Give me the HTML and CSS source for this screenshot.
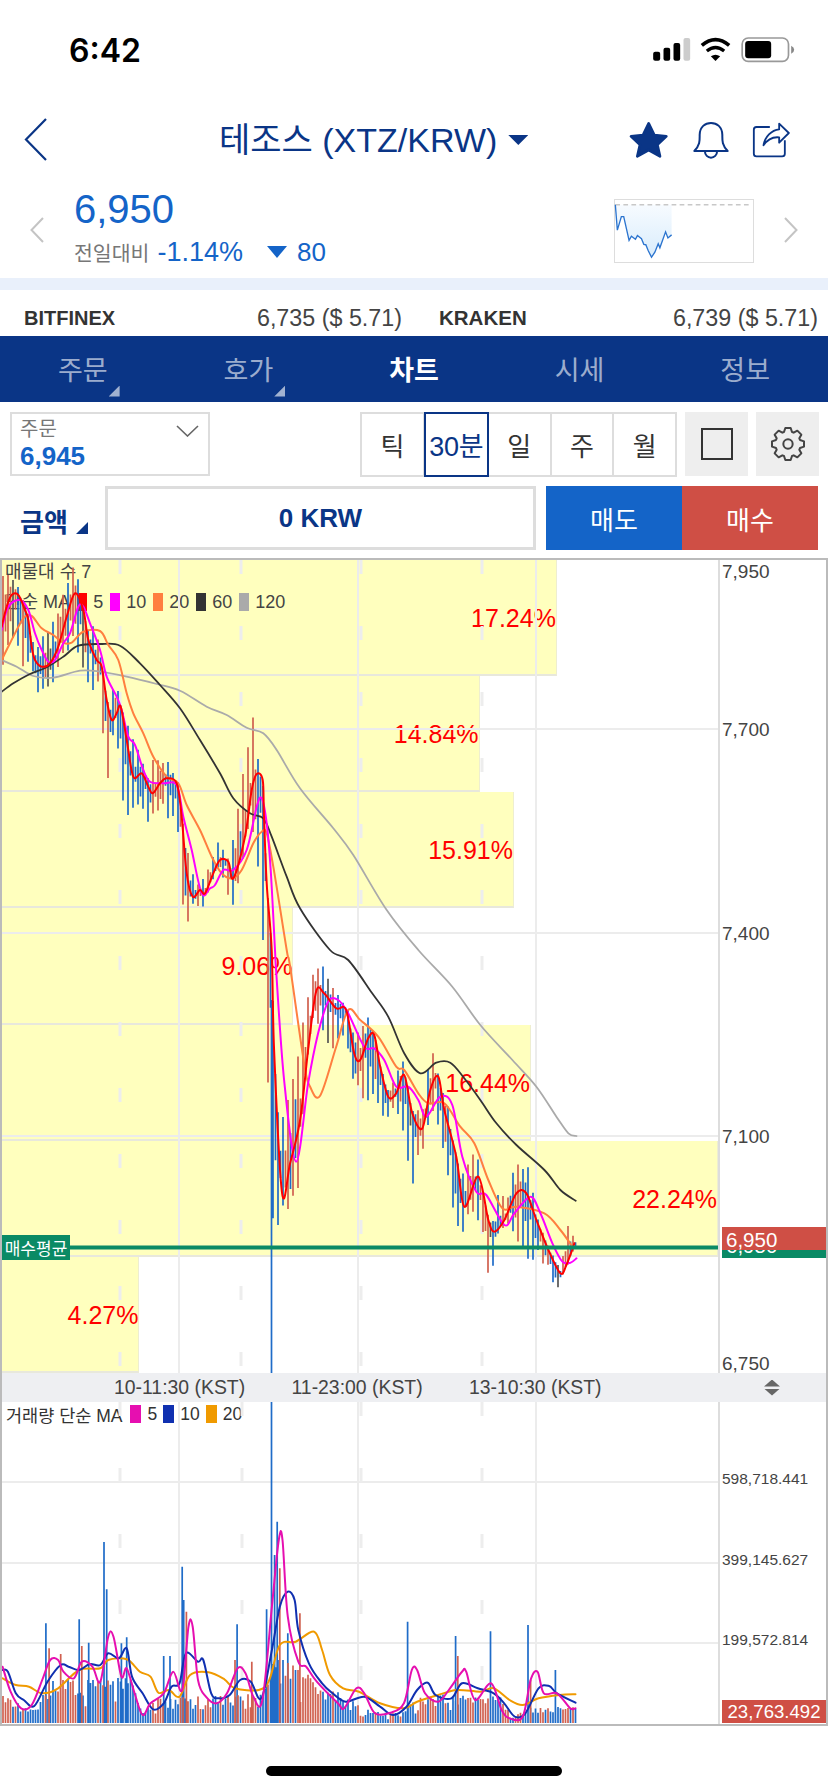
FILE: index.html
```html
<!DOCTYPE html>
<html lang="ko">
<head>
<meta charset="utf-8">
<title>테조스 (XTZ/KRW)</title>
<link rel="stylesheet" href="styles.css">
</head>
<body>
<div class="page">
  <header class="status">
    <span class="time">6:42</span>
    <svg class="status-icons" viewBox="90 30 440 90" aria-hidden="true">
      <rect x="99" y="80" width="21" height="27" rx="6" fill="#000"/>
      <rect x="130" y="68" width="20" height="39" rx="6" fill="#000"/>
      <rect x="160" y="54" width="20" height="53" rx="6" fill="#000"/>
      <rect x="190" y="39" width="20" height="68" rx="6" fill="#ccc"/>
      <path d="M245 61Q286 27 327 61" fill="none" stroke="#000" stroke-width="11"/>
      <path d="M260 78Q286 57 312 78" fill="none" stroke="#000" stroke-width="10"/>
      <path d="M272 94Q286 84 300 94L286 108Z" fill="#000"/>
      <rect x="366" y="39" width="139" height="70" rx="18" fill="none" stroke="#999" stroke-width="5"/>
      <rect x="375" y="48" width="78" height="52" rx="9" fill="#000"/>
      <path d="M513 62Q522 66 522 74Q522 82 513 86Z" fill="#888"/>
    </svg>
  </header>

  <div class="title-row">
    <svg class="back" viewBox="0 0 23 43" aria-hidden="true"><path d="M22 1L2 21.5L22 42" fill="none" stroke="#0a3586" stroke-width="2.2"/></svg>
    <h1 class="title">테조스 (XTZ/KRW)</h1>
    <span class="title-caret"></span>
    <div class="title-icons">
      <svg class="ic-star" viewBox="28 286 120 114" aria-hidden="true"><polygon points="87,293 104,328 140,332 113,357 121,392 87,373 53,392 61,357 34,332 70,328" fill="#0a3586" stroke="#0a3586" stroke-width="8" stroke-linejoin="round"/></svg>
      <svg class="ic-bell" viewBox="215 288 114 114" aria-hidden="true"><path d="M222 378C240 360 238 345 238 330C238 305 255 294 272 294C289 294 306 305 306 330C306 345 304 360 322 378Z M254 380A18 18 0 0 0 290 380" fill="none" stroke="#0a3586" stroke-width="6" stroke-linejoin="round"/></svg>
      <svg class="ic-share" viewBox="392 290 116 108" aria-hidden="true"><path d="M445 305H405Q397 305 397 313V385Q397 393 405 393H482Q490 393 490 385V345M473 295L502 323L473 352V336C455 334 438 342 426 360C430 335 450 314 473 312Z" fill="none" stroke="#0a3586" stroke-width="5.5" stroke-linejoin="round"/></svg>
    </div>
  </div>

  <div class="price-row">
    <svg class="chev" viewBox="0 0 14 26" aria-hidden="true"><path d="M13 1L1.5 13L13 25" fill="none" stroke="#c4c4c4" stroke-width="2"/></svg>
    <div class="price-col">
      <div class="price">6,950</div>
      <div class="change"><span class="change-label">전일대비</span><span class="change-pct">-1.14%</span><span class="change-caret"></span><span class="change-val">80</span></div>
    </div>
    <svg class="spark" viewBox="43 28 418 189" preserveAspectRatio="none" aria-hidden="true">
      <defs><linearGradient id="sparkfill" x1="0" y1="0" x2="0" y2="1"><stop offset="0" stop-color="#f7fbff"/><stop offset="1" stop-color="#d8ecfc"/></linearGradient></defs>
      <rect x="44.5" y="29.5" width="415" height="186" fill="#fff" stroke="#ddd" stroke-width="3"/>
      <polygon points="47,45 53,120 65,80 72,80 88,150 95,138 107,147 113,136 125,145 132,162 138,163 145,180 155,200 165,185 175,160 180,172 197,125 204,143 215,134 215,45" fill="url(#sparkfill)"/>
      <path d="M47 45H447" stroke="#c8c8c8" stroke-width="5" stroke-dasharray="14 10" fill="none"/>
      <polyline points="47,45 53,120 65,80 72,80 88,150 95,138 107,147 113,136 125,145 132,162 138,163 145,180 155,200 165,185 175,160 180,172 197,125 204,143 215,134" fill="none" stroke="#2b74cf" stroke-width="4"/>
    </svg>
    <svg class="chev chev-right" viewBox="0 0 14 26" aria-hidden="true"><path d="M1 1L12.5 13L1 25" fill="none" stroke="#c4c4c4" stroke-width="2"/></svg>
  </div>

  <div class="band"></div>

  <div class="exchanges">
    <div class="exchange"><b>BITFINEX</b><span>6,735 ($ 5.71)</span></div>
    <div class="exchange"><b class="wide">KRAKEN</b><span>6,739 ($ 5.71)</span></div>
  </div>

  <nav class="tabs">
    <div class="tab"><span class="tab-label">주문<i class="corner"></i></span></div>
    <div class="tab"><span class="tab-label">호가<i class="corner"></i></span></div>
    <div class="tab active"><span class="tab-label">차트</span></div>
    <div class="tab"><span class="tab-label">시세</span></div>
    <div class="tab"><span class="tab-label">정보</span></div>
  </nav>

  <div class="toolbar">
    <div class="order-select">
      <div class="order-text"><div class="order-label">주문</div><div class="order-val">6,945</div></div>
      <svg class="order-chev" viewBox="0 0 23 12" aria-hidden="true"><path d="M1 1L11.5 11L22 1" fill="none" stroke="#666" stroke-width="1.6"/></svg>
    </div>
    <div class="segments">
      <div class="seg">틱</div>
      <div class="seg active">30분</div>
      <div class="seg">일</div>
      <div class="seg">주</div>
      <div class="seg">월</div>
    </div>
    <div class="tool-btn"><span class="square-ic"></span></div>
    <div class="tool-btn">
      <svg class="gear" viewBox="-54 -54 108 108" aria-hidden="true"><polygon points="-8,-48 8,-48 12,-36 17,-34 28,-40 40,-28 34,-17 36,-12 48,-8 48,8 36,12 34,17 40,28 28,40 17,34 12,36 8,48 -8,48 -12,36 -17,34 -28,40 -40,28 -34,17 -36,12 -48,8 -48,-8 -36,-12 -34,-17 -40,-28 -28,-40 -17,-34 -12,-36" fill="none" stroke="#444" stroke-width="6" stroke-linejoin="round"/><circle r="14" fill="none" stroke="#444" stroke-width="6"/></svg>
    </div>
  </div>

  <div class="trade-row">
    <div class="amount-label">금액<i class="amount-corner"></i></div>
    <div class="amount-input">0 KRW</div>
    <div class="trade-btn sell">매도</div>
    <div class="trade-btn buy">매수</div>
  </div>

  <section class="chart">
    <div class="pane main-pane">
      <div class="plot">
        <div class="vp">
          <div class="vp-row"><div class="vp-bar" style="width:77.5%">17.24%</div></div>
          <div class="vp-row"><div class="vp-bar" style="width:66.7%">14.84%</div></div>
          <div class="vp-row"><div class="vp-bar" style="width:71.5%">15.91%</div></div>
          <div class="vp-row"><div class="vp-bar" style="width:40.7%">9.06%</div></div>
          <div class="vp-row"><div class="vp-bar" style="width:73.9%">16.44%</div></div>
          <div class="vp-row"><div class="vp-bar" style="width:100%">22.24%</div></div>
          <div class="vp-row"><div class="vp-bar" style="width:19.2%">4.27%</div></div>
        </div>
        <div class="legend main-legend">
          <div class="legend-line">매물대 수 7</div>
          <div class="legend-line">단순 MA
            <i class="sw sw-red"></i>5<i class="sw sw-mag"></i>10<i class="sw sw-org"></i>20<i class="sw sw-blk"></i>60<i class="sw sw-gry"></i>120
          </div>
        </div>
        <svg id="price-svg" class="plot-svg" viewBox="2 560 716 813" aria-hidden="true"></svg>
        <div class="avg-tag">매수평균</div>
      </div>
      <div class="axis">
        <span class="tick" style="top:1px">7,950</span>
        <span class="tick" style="top:159px">7,700</span>
        <span class="tick" style="top:363px">7,400</span>
        <span class="tick" style="top:566px">7,100</span>
        <span class="tick" style="top:793px">6,750</span>
        <span class="tag tag-green" style="top:674px">6,950</span>
        <span class="tag tag-red" style="top:667px">6,950</span>
      </div>
    </div>

    <div class="pane time-pane">
      <div class="time-labels">
        <span>10-11:30 (KST)</span>
        <span>11-23:00 (KST)</span>
        <span>13-10:30 (KST)</span>
      </div>
      <div class="time-handle"><i class="up"></i><i class="down"></i></div>
    </div>

    <div class="pane vol-pane">
      <div class="plot">
        <div class="legend vol-legend"><span class="vol-name">거래량 단순 MA</span>
          <i class="sw sw-pink"></i>5<i class="sw sw-navy"></i>10<i class="sw sw-amber"></i>20
        </div>
        <svg id="vol-svg" class="plot-svg" viewBox="2 1402 716 322" aria-hidden="true"></svg>
      </div>
      <div class="axis">
        <span class="tick tick-sm" style="top:67px">598,718.441</span>
        <span class="tick tick-sm" style="top:148px">399,145.627</span>
        <span class="tick tick-sm" style="top:228px">199,572.814</span>
        <span class="vol-tag">23,763.492</span>
      </div>
    </div>
  </section>

  <div class="home-zone"><span class="home-bar"></span></div>
</div>
<script src="chart.js"></script>
</body>
</html>
```

FILE: styles.css
```css
* { box-sizing: border-box; }
html, body { margin: 0; padding: 0; background: #fff; }
body { font-family: "Liberation Sans", "Noto Sans CJK KR", sans-serif; color: #333; }
.page { width: 828px; height: 1792px; overflow: hidden; display: flex; flex-direction: column; }

.status { height: 100px; flex: none; display: flex; align-items: flex-start; padding: 32px 0 0 69px; }
.time { font: 600 32px/38px Inter, "Liberation Sans", sans-serif; color: #000; }
.status-icons { width: 147px; height: 30px; margin-left: auto; margin-right: 31px; margin-top: 3px; }

.title-row { height: 80px; flex: none; display: flex; align-items: center; padding-left: 24px; }
.back { width: 23px; height: 43px; margin-top: -1px; }
.title { margin: 0 0 0 172px; font-size: 34px; font-weight: 400; color: #0a3586; line-height: 44px; white-space: nowrap; }
.title-caret { width: 20px; height: 10px; margin-left: 11px; background: #0a3586; clip-path: polygon(0 0, 100% 0, 50% 100%); }
.title-icons { margin-left: auto; display: flex; align-items: center; padding-right: 37px; }
.ic-star { width: 40px; height: 38px; }
.ic-bell { width: 38px; height: 38px; margin-left: 23px; }
.ic-share { width: 39px; height: 36px; margin-left: 22px; }

.price-row { height: 98px; flex: none; display: flex; align-items: center; padding: 2px 30px 0; }
.chev { width: 14px; height: 26px; flex: none; }
.chev-right { margin-left: 30px; }
.price-col { margin-left: 30px; margin-top: -6px; }
.price { font-size: 40px; line-height: 44px; color: #1464c8; }
.change { display: flex; align-items: center; height: 30px; margin-top: 6px; }
.change-label { font-size: 20.5px; color: #777; }
.change-pct { font-size: 27px; color: #1464c8; margin-left: 8px; }
.change-caret { width: 20px; height: 12px; margin-left: 24px; background: #1464c8; clip-path: polygon(0 0, 100% 0, 50% 100%); }
.change-val { font-size: 26px; color: #1464c8; margin-left: 10px; }
.spark { width: 140px; height: 64px; margin-left: auto; margin-top: 2px; flex: none; }

.band { height: 12px; flex: none; background: #e9f0fb; }

.exchanges { height: 46px; flex: none; display: flex; padding: 0 10px 0 24px; align-items: flex-end; }
.exchange { display: flex; justify-content: space-between; align-items: center; height: 36px; }
.exchange:first-child { width: 378px; }
.exchange:last-child { width: 379px; margin-left: 37px; }
.exchange b { font-size: 20px; color: #333; }
.exchange b.wide { font-size: 20.5px; }
.exchange span { font-size: 23.3px; color: #444; }

.tabs { height: 66px; flex: none; background: #0a3586; display: flex; }
.tab { flex: 1; display: flex; align-items: center; justify-content: center; }
.tab-label { position: relative; font-size: 27px; color: rgba(255,255,255,.62); margin-top: -2px; }
.tab.active .tab-label { color: #fff; font-weight: 700; }
.corner { position: absolute; right: -12px; bottom: -9px; width: 11px; height: 11px; background: rgba(255,255,255,.62); clip-path: polygon(100% 0, 100% 100%, 0 100%); }

.toolbar { height: 65px; flex: none; margin-top: 10px; display: flex; padding-left: 10px; }
.order-select { width: 200px; height: 64px; border: 2px solid #ddd; display: flex; padding: 3px 9px 0 8px; justify-content: space-between; }
.order-label { font-size: 20px; line-height: 24px; color: #777; }
.order-val { font-size: 26px; line-height: 30px; font-weight: 700; color: #1464c8; }
.order-chev { width: 23px; height: 12px; margin-top: 8px; }
.segments { width: 317px; height: 65px; margin-left: 150px; border: 2px solid #ddd; display: flex; }
.seg { flex: 1; display: flex; align-items: center; justify-content: center; font-size: 26px; color: #333; border-right: 2px solid #ddd; }
.seg:last-child { border-right: 0; }
.seg.active { flex: none; width: 65px; margin: -2px 0 -2px -1px; color: #0a3586; border: 2px solid #0a3586; font-size: 27px; white-space: nowrap; letter-spacing: -.3px; }
.tool-btn { width: 63px; height: 64px; margin-left: 8px; background: #eee; display: flex; align-items: center; justify-content: center; flex: none; }
.square-ic { width: 32px; height: 32px; border: 2px solid #333; }
.gear { width: 36px; height: 36px; }

.trade-row { height: 64px; flex: none; margin-top: 9px; display: flex; padding-left: 20px; }
.amount-label { position: relative; width: 85px; font-size: 26px; font-weight: 700; color: #0a3586; display: flex; align-items: center; padding-top: 4px; }
.amount-corner { position: absolute; left: 56px; bottom: 16px; width: 12px; height: 12px; background: #0a3586; clip-path: polygon(100% 0, 100% 100%, 0 100%); }
.amount-input { width: 431px; border: 3px solid #ddd; display: flex; align-items: center; justify-content: center; font-size: 26px; font-weight: 700; color: #0a3586; }
.trade-btn { width: 136px; display: flex; align-items: center; justify-content: center; font-size: 26px; color: #fff; }
.sell { margin-left: 10px; background: #1464c8; }
.buy { background: #cf4f45; }

.chart { height: 1168px; flex: none; margin-top: 8px; border: 2px solid #bbb; display: flex; flex-direction: column; }
.pane { display: flex; flex: none; }
.main-pane { height: 813px; }
.time-pane { height: 29px; background: #eeeff2; }
.vol-pane { height: 322px; }
.plot { position: relative; width: 716px; flex: none; overflow: hidden; }
.plot-svg { position: absolute; left: 0; top: 0; width: 716px; height: 100%; display: block; }
.axis { position: relative; flex: 1; border-left: 2px solid #ddd; }

.vp { height: 100%; display: flex; flex-direction: column; }
.vp-row { flex: 1; display: flex; }
.vp-bar { background: #ffffbe; border-right: 1px solid #eeeed0; border-bottom: 2px solid #e8e8dc; padding-top: 3px; display: flex; align-items: center; justify-content: flex-end; font-size: 25px; color: #f00; }

.legend { position: absolute; left: 3px; color: #444; font-size: 18px; white-space: nowrap; }
.main-legend { top: -3px; }
.legend-line { height: 30px; line-height: 26px; display: flex; align-items: center; gap: 6.5px; }
.sw { display: inline-block; width: 10px; height: 18px; flex: none; }
.sw-red { background: #f00; }
.sw-mag { background: #f0f; }
.sw-org { background: #ff7f3f; }
.sw-blk { background: #333; }
.sw-gry { background: #aaa; }
.sw-pink { background: #e60fb0; width: 11px; }
.sw-navy { background: #1030b0; width: 11px; }
.sw-amber { background: #f09a00; width: 11px; }
.vol-legend { top: 3px; left: 4px; height: 18px; font-size: 17.5px; display: flex; align-items: center; gap: 6px; color: #333; }
.vol-name { margin-right: 2px; }

.avg-tag { position: absolute; left: 0; top: 675px; width: 68px; height: 25px; background: #0a8a65; color: #fff; font-size: 17px; display: flex; align-items: center; justify-content: center; }

.tick { position: absolute; left: 2px; font-size: 19px; line-height: 22px; color: #444; }
.tick-sm { font-size: 15.5px; line-height: 20px; }
.tag { position: absolute; left: 2px; right: 0; color: #fff; font-size: 20.5px; padding-left: 4px; }
.tag-red { height: 23px; line-height: 25px; background: #cf4f45; }
.tag-green { height: 24px; line-height: 24px; background: #0a8a65; }
.vol-tag { position: absolute; left: 2px; right: 0; top: 298px; height: 23px; background: #cf4f45; color: #fff; font-size: 18.6px; line-height: 24px; text-align: center; }

.time-labels { width: 716px; flex: none; padding-left: 112px; display: flex; align-items: center; font-size: 19.4px; color: #444; white-space: nowrap; }
.time-labels span { width: 177.5px; flex: none; }
.time-handle { flex: 1; display: flex; flex-direction: column; align-items: center; justify-content: center; gap: 2px; }
.time-handle i { width: 16px; height: 7px; background: #666; }
.time-handle .up { clip-path: polygon(50% 0, 100% 100%, 0 100%); }
.time-handle .down { clip-path: polygon(0 0, 100% 0, 50% 100%); }

.home-zone { flex: 1; display: flex; justify-content: center; padding-top: 40px; }
.home-bar { width: 296px; height: 10px; border-radius: 5px; background: #000; }

.grid { stroke: #ececec; stroke-width: 2; fill: none; }
.grid-dash { stroke: #ededed; stroke-width: 3; stroke-dasharray: 14 52; fill: none; }
.ma { fill: none; stroke-linejoin: round; stroke-linecap: round; }
.ma-red { stroke: #f00; stroke-width: 2; }
.ma-mag { stroke: #f0f; stroke-width: 2; }
.ma-org { stroke: #ff7f3f; stroke-width: 2; }
.ma-blk { stroke: #333; stroke-width: 1.8; }
.ma-gry { stroke: #aaa; stroke-width: 1.8; }
.ma-pink { stroke: #e60fb0; stroke-width: 2; }
.ma-navy { stroke: #1030b0; stroke-width: 2; }
.ma-amber { stroke: #f09a00; stroke-width: 2; }
.bar-blue { stroke: #1f6cc8; stroke-width: 1.7; fill: none; }
.bar-red { stroke: #d0604f; stroke-width: 1.7; fill: none; }
.bar-dark { stroke: #555; stroke-width: 1.7; fill: none; }
.avg-line { fill: #0a8a65; }
```

FILE: chart.js
```js
(function () {
  var NS = 'http://www.w3.org/2000/svg';
  function z3(p) { return [p[0] / 3, 550 + p[1] / 3]; }
  function z4(p) { return [200 + p[0] / 2.497, 950 + p[1] / 3]; }
  function z5(p) { return [p[0] / 1.894, 1360 + p[1] / 3]; }
  function pairs(a) { var o = []; for (var i = 0; i < a.length; i += 2) o.push([a[i], a[i + 1]]); return o; }
  function join(a3, a4) { return pairs(a3).map(z3).concat(pairs(a4 || []).map(z4)); }

  var red = join(
    [5,230,20,170,35,135,55,135,75,180,85,210,95,290,105,330,125,350,150,340,175,290,200,200,225,130,250,180,265,270,290,330,305,350,320,450,335,510,350,490,362,470,380,570,400,680,425,670,445,710,458,730,480,700,500,685,530,700,545,800,560,970,578,1040,600,1020,615,1030,640,970,660,930,685,935,700,985,735,860,755,720,770,672,788,690,792,800,800,1000,815,1200],
    [185,300,205,730,225,640,250,510,270,300,290,125,310,130,340,175,365,180,385,310,400,330,420,265,435,255,450,350,470,440,490,430,510,375,530,490,555,535,575,420,595,380,610,480,640,620,660,770,695,680,720,810,735,845,760,810,790,730,815,730,840,810,870,900,900,970,915,945,935,880]);
  var mag = join(
    [5,240,25,170,60,150,85,180,105,250,125,300,145,335,165,330,190,280,210,250,235,170,250,170,270,220,300,300,320,380,350,440,365,480,385,560,405,585,430,660,450,695,490,700,530,705,550,800,575,900,605,1030,630,1015,645,1005,670,960,700,960,740,900,770,770,785,745,800,820,812,960,825,1200],
    [190,60,210,390,240,635,270,400,295,250,320,155,345,150,370,190,410,290,435,295,460,330,490,410,520,410,545,450,565,500,600,440,630,465,655,620,690,725,715,735,760,825,785,790,825,740,850,790,880,880,905,935,925,938,940,925]);
  var org = join(
    [5,330,30,280,70,205,95,198,125,235,160,255,190,278,215,278,250,245,300,243,325,285,355,330,380,430,400,490,430,550,460,620,500,680,535,700,560,765,600,840,635,920,665,970,695,985,725,960,760,880,785,845,800,850,820,950,860,1200],
    [225,50,260,340,275,410,300,437,340,290,370,180,400,210,445,260,490,350,510,360,545,430,570,460,610,460,650,530,685,580,720,690,755,775,790,770,860,790,900,840,930,890]);
  var blk = join(
    [5,425,40,400,90,372,140,352,190,320,235,287,300,282,360,287,420,340,480,405,540,475,600,570,660,670,700,745,750,790,790,805,815,860,860,980,900,1075,990,1200],
    [370,30,430,130,470,200,510,310,550,370,590,338,625,338,660,385,700,450,740,520,790,585,860,660,900,720,938,752]);
  var gry = join(
    [5,330,50,350,100,378,160,383,240,362,300,365,380,380,470,402,540,422,620,470,680,495,740,533,790,550,830,600,900,715,1000,835,1060,915,1160,1080],
    [545,0,630,110,700,225,780,330,840,410,890,500,920,550,940,558]);

  var hi = join(
    [5,70,20,70,40,80,50,100,70,150,90,250,110,290,130,240,160,200,185,130,200,80,220,30,235,80,245,220,265,240,285,220,300,265,320,510,348,365,363,470,378,500,405,575,445,680,460,610,505,630,535,700,545,800,572,940,590,1010,630,940,655,855,690,960,708,770,725,700,753,478,765,510,790,800],
    [183,540,195,480,215,510,228,345,250,280,270,90,285,30,310,50,330,110,345,130,370,180,385,250,415,195,430,215,445,400,465,430,490,370,505,315,530,480,555,480,578,275,600,400,620,460,640,690,665,640,690,580,705,750,725,860,742,735,770,730,786,630,818,640,835,750,850,845,870,910,888,960,905,930,918,805,935,865]);
  var lo = join(
    [5,360,38,270,70,375,90,350,115,435,135,435,155,410,185,330,220,280,240,355,265,425,280,455,300,390,318,810,333,570,348,545,363,720,378,840,390,770,445,820,490,780,505,810,530,790,550,1085,557,1200,572,1070,590,1065,602,1095,630,1010,655,950,690,1055,700,1095,725,950,753,800,790,1200],
    [183,850,190,965,200,740,215,800,247,760,270,180,300,245,318,240,322,345,360,250,385,415,390,425,445,490,465,515,490,465,516,650,530,740,535,650,555,620,580,480,605,590,612,640,640,845,655,875,665,800,680,790,705,850,724,1025,730,965,742,860,770,820,818,955,840,920,870,960,888,1035,905,985,920,900,935,910]);

  var vPink = pairs([5,920,20,995,40,1045,60,1035,80,960,95,900,110,900,120,935,140,955,155,905,175,920,190,965,205,830,215,830,230,950,240,925,255,1000,270,1065,285,1030,310,1000,328,935,345,990,357,800,365,800,375,960,390,1010,410,1030,430,1000,450,925,465,940,480,1010,497,1020,515,740,528,540,535,540,545,770,565,905,580,920,600,965,640,1030,652,1045,675,985,690,1000,710,1060,740,1058,765,1030,780,930,790,930,805,1000,830,1025,850,990,875,935,883,935,900,1020,930,970,950,1050,965,1075,990,1070,1005,960,1018,935,1030,1000,1055,1000,1080,1045,1090,1045]).map(z5);
  var vNavy = pairs([5,930,15,935,30,1000,45,1020,65,1038,90,965,115,915,130,920,150,930,170,912,190,915,205,880,225,895,240,865,250,950,270,1000,290,1048,310,1030,325,980,340,970,352,880,375,905,385,900,400,1000,415,1015,435,1005,455,960,475,965,495,1015,515,870,530,740,545,695,558,720,565,810,585,910,610,970,630,1000,655,1025,690,1010,720,1040,745,1065,770,1040,790,990,810,968,825,1005,855,1015,875,970,905,985,935,1000,955,1030,975,1070,995,1060,1020,985,1040,978,1055,1000,1090,1028]).map(z5);
  var vAmber = pairs([5,955,30,975,55,980,80,1000,110,985,150,930,190,925,205,900,240,898,265,935,285,950,300,998,320,990,340,1010,360,945,395,937,425,958,445,985,490,990,510,960,530,855,560,845,595,815,610,870,625,945,650,985,680,995,720,1030,765,1045,790,1025,830,1005,865,990,910,995,935,985,965,1020,990,1035,1020,1015,1060,1005,1090,1003]).map(z5);
  var vBase = pairs([0,1000,60,1050,100,960,250,950,270,1060,300,1010,500,1000,520,880,600,960,700,1050,760,1060,790,1000,950,1010,970,1075,1000,1040,1090,1040]).map(z5);
  var vSpikes = [[87,790,'b'],[93,865,'r'],[115,882,'r'],[150,778,'b'],[155,858,'r'],[168,848,'b'],[197,546,'b'],[202,688,'b'],[230,850,'b'],[240,832,'b'],[310,888,'b'],[322,888,'b'],[345,620,'b'],[348,720,'b'],[353,755,'r'],[445,900,'r'],[449,793,'b'],[477,905,'r'],[505,748,'b'],[520,585,'b'],[525,485,'b'],[530,625,'r'],[545,820,'b'],[568,760,'r'],[772,785,'b'],[863,828,'b'],[867,888,'r'],[929,814,'b'],[1000,795,'b'],[1005,960,'r'],[1052,930,'b']];

  var seed = 20240;
  function rnd() { seed = (seed * 1103515245 + 12345) & 0x7fffffff; return (seed >> 8) / 8388608 % 1; }

  function at(pts, x) {
    if (x <= pts[0][0]) return pts[0][1];
    for (var i = 1; i < pts.length; i++) {
      if (x <= pts[i][0]) {
        var a = pts[i - 1], b = pts[i];
        return a[1] + (b[1] - a[1]) * (x - a[0]) / ((b[0] - a[0]) || 1);
      }
    }
    return pts[pts.length - 1][1];
  }
  function smooth(p) {
    var d = 'M' + p[0][0].toFixed(1) + ' ' + p[0][1].toFixed(1);
    for (var i = 0; i < p.length - 1; i++) {
      var a = p[Math.max(i - 1, 0)], b = p[i], c = p[i + 1], e = p[Math.min(i + 2, p.length - 1)];
      d += 'C' + (b[0] + (c[0] - a[0]) / 6).toFixed(1) + ' ' + (b[1] + (c[1] - a[1]) / 6).toFixed(1) + ' ' +
        (c[0] - (e[0] - b[0]) / 6).toFixed(1) + ' ' + (c[1] - (e[1] - b[1]) / 6).toFixed(1) + ' ' +
        c[0].toFixed(1) + ' ' + c[1].toFixed(1);
    }
    return d;
  }
  function add(svg, cls, d) {
    var el = document.createElementNS(NS, 'path');
    el.setAttribute('class', cls);
    el.setAttribute('d', d);
    svg.appendChild(el);
  }
  function vlines(xs, y0, y1) { return xs.map(function (x) { return 'M' + x + ' ' + y0 + 'V' + y1; }).join(''); }
  function hlines(ys) { return ys.map(function (y) { return 'M2 ' + y + 'H718'; }).join(''); }

  /* price pane */
  var ps = document.getElementById('price-svg');
  add(ps, 'grid', hlines([729, 933, 1136]) + vlines([179, 358, 536], 560, 1373));
  add(ps, 'grid-dash', vlines([120, 241, 361, 482], 560, 1373));
  var paths = { b: '', r: '', d: '' }, colors = [];
  for (var i = 0; i < 230; i++) {
    var x = 3 + 2.5 * i;
    if (x > 577) break;
    var c = at(red, x), H = at(hi, x), L = at(lo, x);
    var slope = at(red, x + 5) - at(red, x - 5);
    var k = slope > 0 ? (rnd() < 0.78 ? 'b' : 'r') : (rnd() < 0.72 ? 'r' : 'b');
    if (rnd() < 0.04) k = 'd';
    var f1 = rnd(), f2 = rnd();
    var tall = i % 2 === 0;
    var t = c - Math.max(c - H, 4) * (tall ? 0.75 + 0.25 * f1 : 0.15 + 0.4 * f1);
    var u = c + Math.max(L - c, 4) * (tall ? 0.75 + 0.25 * f2 : 0.15 + 0.4 * f2);
    paths[k] += 'M' + x.toFixed(1) + ' ' + t.toFixed(1) + 'V' + u.toFixed(1);
    colors.push(k);
  }
  add(ps, 'bar-blue', paths.b + 'M271.5 1000V1373');
  add(ps, 'bar-red', paths.r);
  add(ps, 'bar-dark', paths.d);
  add(ps, 'ma ma-gry', smooth(gry));
  add(ps, 'ma ma-blk', smooth(blk));
  add(ps, 'ma ma-org', smooth(org));
  add(ps, 'ma ma-mag', smooth(mag));
  add(ps, 'ma ma-red', smooth(red));
  add(ps, 'avg-line', 'M2 1245.5H718V1249.5H2Z');

  /* volume pane */
  var vs = document.getElementById('vol-svg');
  add(vs, 'grid', hlines([1482, 1563, 1643]) + vlines([179, 358, 536], 1402, 1723));
  add(vs, 'grid-dash', vlines([120, 242, 361, 482], 1402, 1723));
  var vb = { b: '', r: '' };
  colors.forEach(function (k, idx) {
    var x = 3 + 2.5 * idx;
    var top = at(vBase, x);
    var h = (1723 - top) * (1 - 0.7 * rnd() * rnd() - (idx % 2 ? 0.1 * rnd() : 0));
    vb[k === 'r' ? 'r' : 'b'] += 'M' + x.toFixed(1) + ' 1723V' + (1723 - h).toFixed(1);
  });
  vSpikes.forEach(function (s) {
    vb[s[2]] += 'M' + (s[0] / 1.894).toFixed(1) + ' 1723V' + (1360 + s[1] / 3).toFixed(1);
  });
  add(vs, 'bar-blue', vb.b + 'M271.5 1402V1723');
  add(vs, 'bar-red', vb.r);
  add(vs, 'ma ma-amber', smooth(vAmber));
  add(vs, 'ma ma-navy', smooth(vNavy));
  add(vs, 'ma ma-pink', smooth(vPink));
})();
```
